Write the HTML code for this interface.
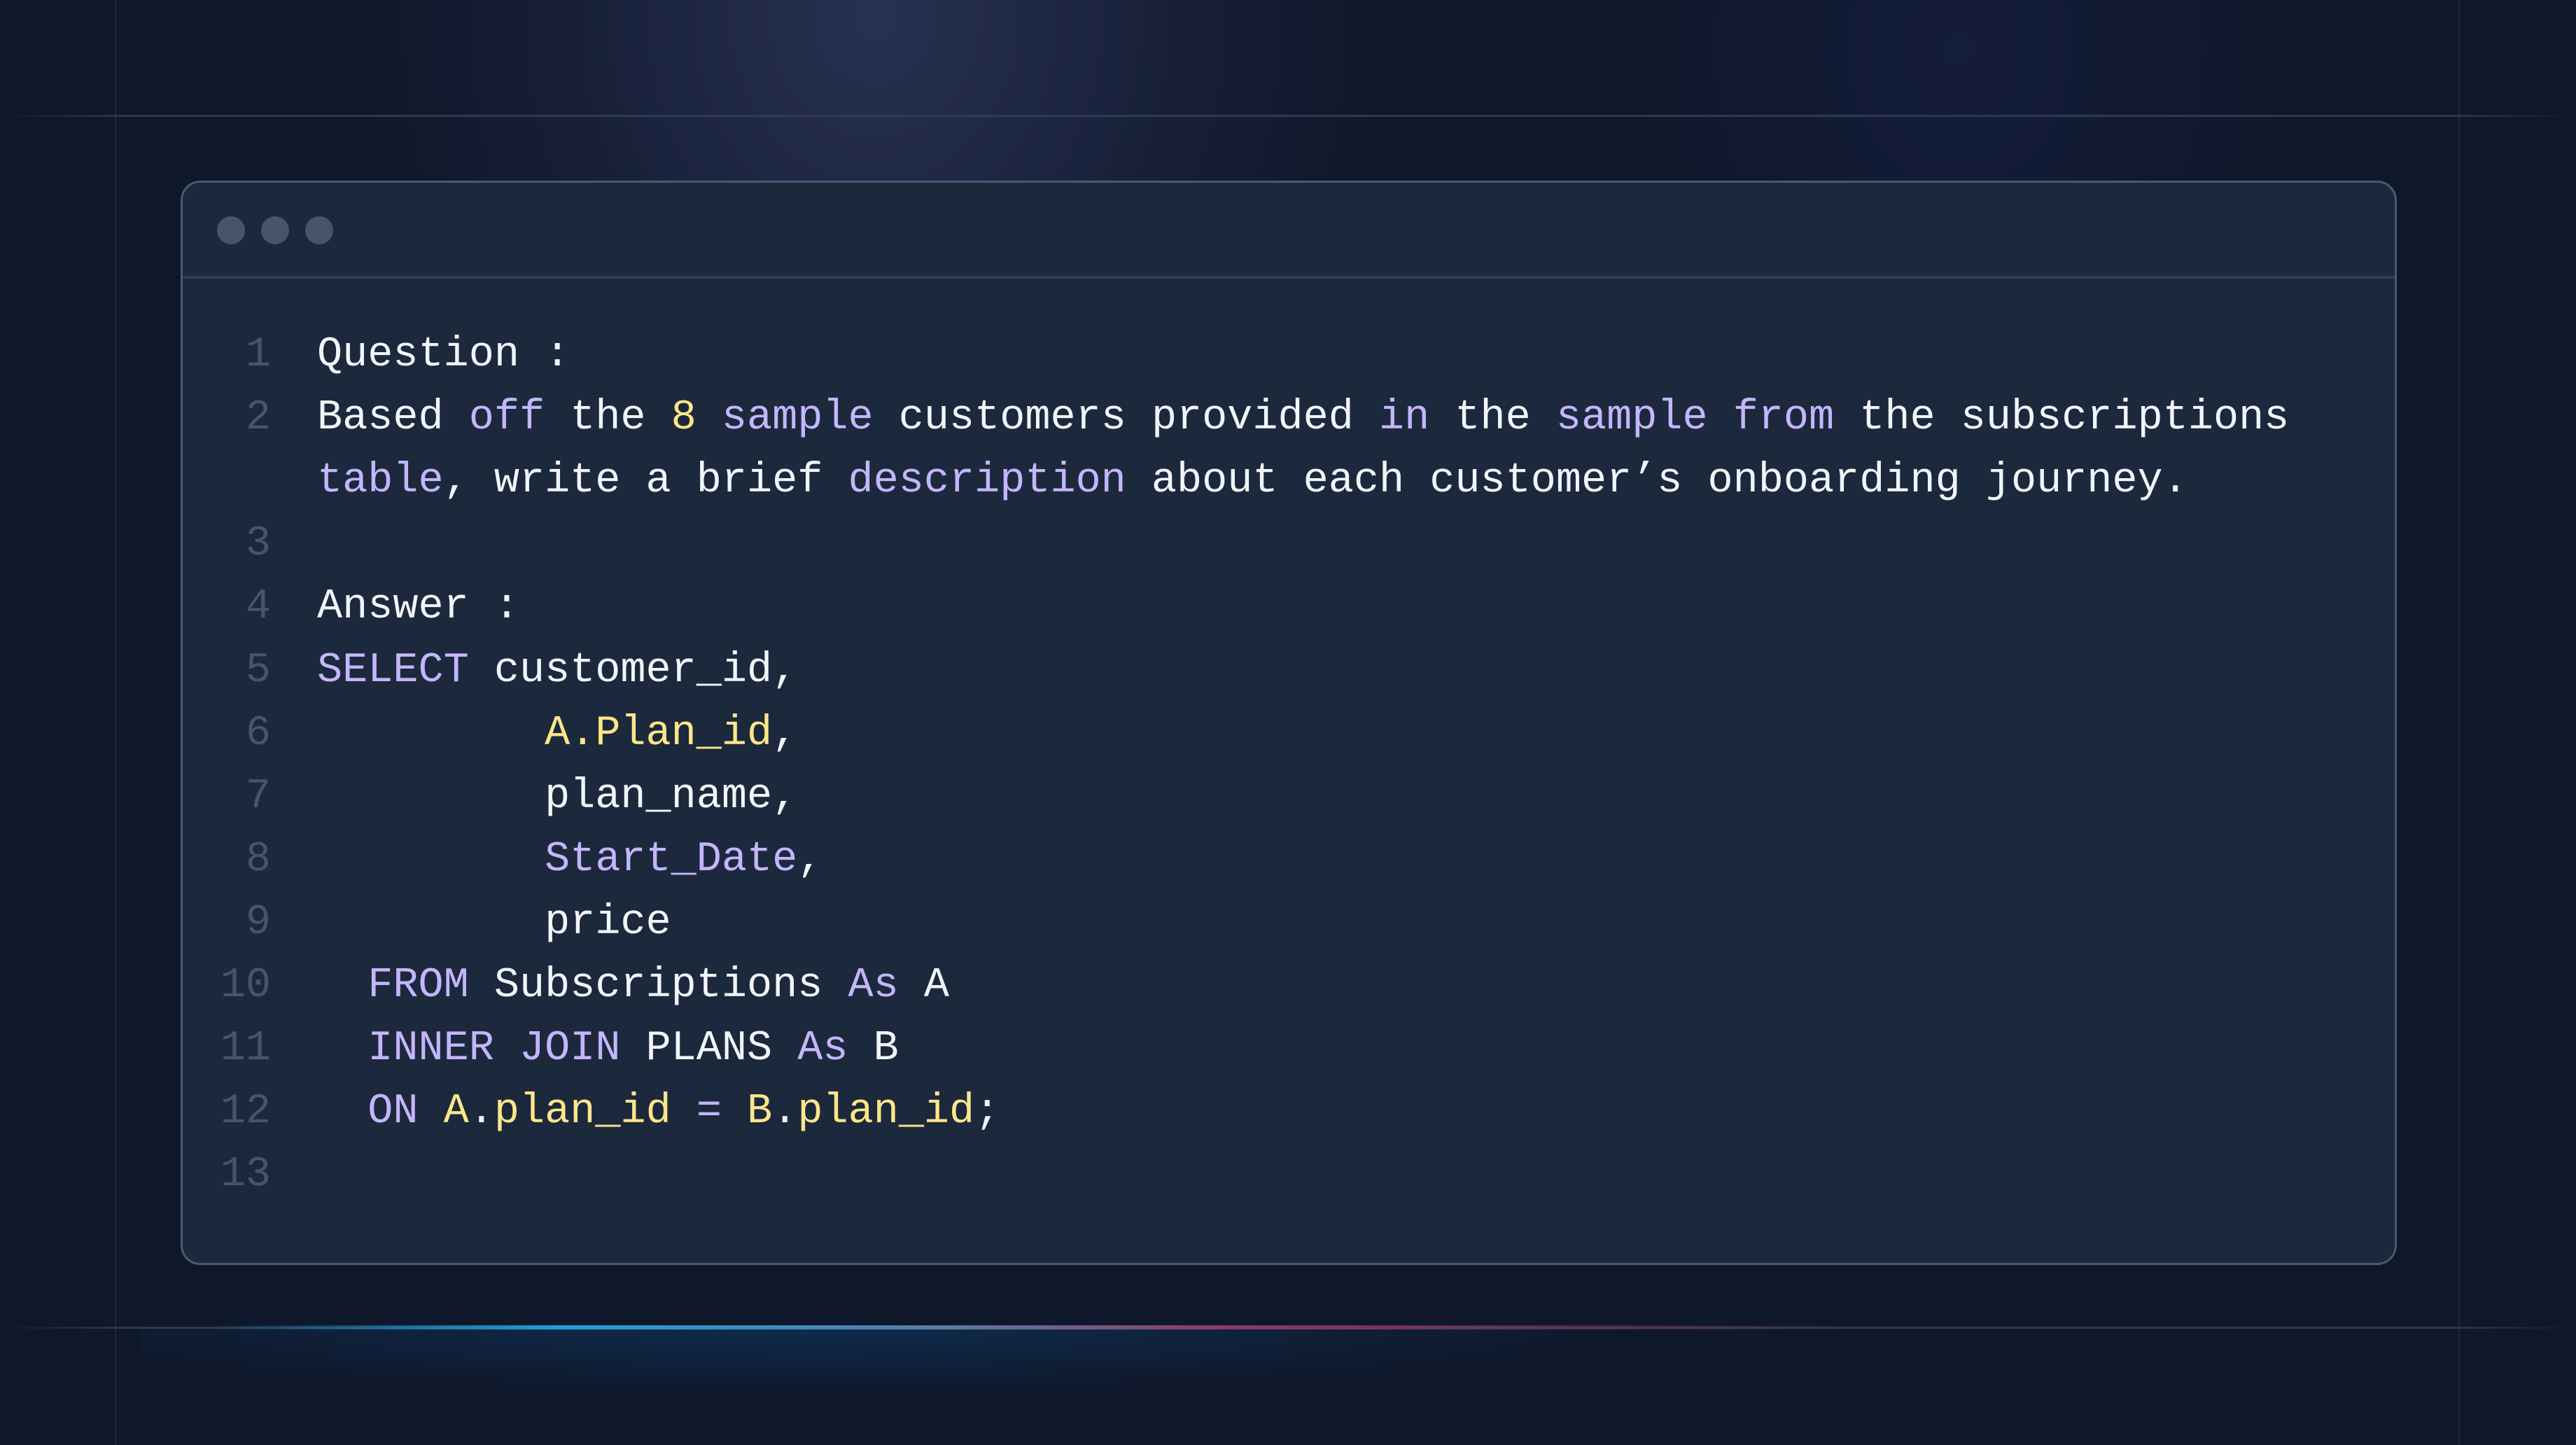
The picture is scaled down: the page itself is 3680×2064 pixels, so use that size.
<!DOCTYPE html>
<html><head><meta charset="utf-8"><style>
html,body{margin:0;padding:0;}
body{width:3680px;height:2064px;background:#0f172a;position:relative;overflow:hidden;font-family:"Liberation Mono",monospace;}
.glow1{position:absolute;left:500px;top:-200px;width:1500px;height:1100px;background:radial-gradient(ellipse at 50% 20%,rgba(70,80,130,.45),rgba(60,70,120,.15) 45%,rgba(15,23,42,0) 70%);}
.glow2{position:absolute;left:2300px;top:-200px;width:1000px;height:900px;background:radial-gradient(ellipse at 50% 30%,rgba(30,40,90,.35),rgba(15,23,42,0) 70%);}
.hl{position:absolute;left:0;width:3680px;height:3px;background:linear-gradient(90deg,rgba(51,65,85,0),rgba(51,65,85,.8) 5%,rgba(51,65,85,.8) 95%,rgba(51,65,85,0));}
.vl{position:absolute;top:0;width:2px;height:2064px;background:rgba(51,65,85,.45);}
.bglow{position:absolute;left:300px;top:1893px;width:2500px;height:6px;background:linear-gradient(90deg,rgba(14,165,233,0),#1ea0d8 20%,#5b7aa5 42%,#8a3a64 58%,rgba(120,50,90,0) 95%);}
.bglow2{position:absolute;left:200px;top:1896px;width:2400px;height:160px;background:radial-gradient(ellipse 50% 60% at 40% 0%,rgba(14,120,200,.22),rgba(15,23,42,0) 100%);}
.card{position:absolute;left:258px;top:258px;width:3160px;height:1543px;background:#1c293c;border:3px solid #475a6e;border-radius:28px;}
.hdr{position:absolute;left:0;top:0;right:0;height:133px;border-bottom:4px solid #2f3f52;}
.dot{position:absolute;top:48px;width:40px;height:40px;border-radius:50%;background:#475569;}
.code{position:absolute;left:0;top:201px;font-size:60.2px;line-height:90.1px;white-space:pre;color:#f1f5f9;}
.ln{position:absolute;left:0;width:126px;text-align:right;color:#475569;}
.tx{position:absolute;left:192px;}
.p{color:#c4b5fd}.y{color:#fde68a}
</style></head><body>
<div class="glow1"></div><div class="glow2"></div>
<div class="hl" style="top:164px"></div>
<div class="hl" style="top:1895px"></div>
<div class="vl" style="left:164px"></div>
<div class="vl" style="left:3512px"></div>
<div class="bglow2"></div><div class="bglow"></div>
<div class="card">
<div class="hdr"><div class="dot" style="left:49px"></div><div class="dot" style="left:112px"></div><div class="dot" style="left:175px"></div></div>
<div class="code">
<div class="ln" style="top:0">1</div><div class="tx" style="top:0">Question :</div>
<div class="ln" style="top:90.1px">2</div><div class="tx" style="top:90.1px">Based <span class="p">off</span> the <span class="y">8</span> <span class="p">sample</span> customers provided <span class="p">in</span> the <span class="p">sample from</span> the subscriptions</div>
<div class="tx" style="top:180.2px"><span class="p">table</span>, write a brief <span class="p">description</span> about each customer’s onboarding journey.</div>
<div class="ln" style="top:270.3px">3</div>
<div class="ln" style="top:360.4px">4</div><div class="tx" style="top:360.4px">Answer :</div>
<div class="ln" style="top:450.5px">5</div><div class="tx" style="top:450.5px"><span class="p">SELECT</span> customer_id,</div>
<div class="ln" style="top:540.6px">6</div><div class="tx" style="top:540.6px">         <span class="y">A.Plan_id</span>,</div>
<div class="ln" style="top:630.7px">7</div><div class="tx" style="top:630.7px">         plan_name,</div>
<div class="ln" style="top:720.8px">8</div><div class="tx" style="top:720.8px">         <span class="p">Start_Date</span>,</div>
<div class="ln" style="top:810.9px">9</div><div class="tx" style="top:810.9px">         price</div>
<div class="ln" style="top:901px">10</div><div class="tx" style="top:901px">  <span class="p">FROM</span> Subscriptions <span class="p">As</span> A</div>
<div class="ln" style="top:991.1px">11</div><div class="tx" style="top:991.1px">  <span class="p">INNER JOIN</span> PLANS <span class="p">As</span> B</div>
<div class="ln" style="top:1081.2px">12</div><div class="tx" style="top:1081.2px">  <span class="p">ON</span> <span class="y">A</span>.<span class="y">plan_id</span> <span class="p">=</span> <span class="y">B</span>.<span class="y">plan_id</span>;</div>
<div class="ln" style="top:1171.3px">13</div>
</div>
</div>
</body></html>
